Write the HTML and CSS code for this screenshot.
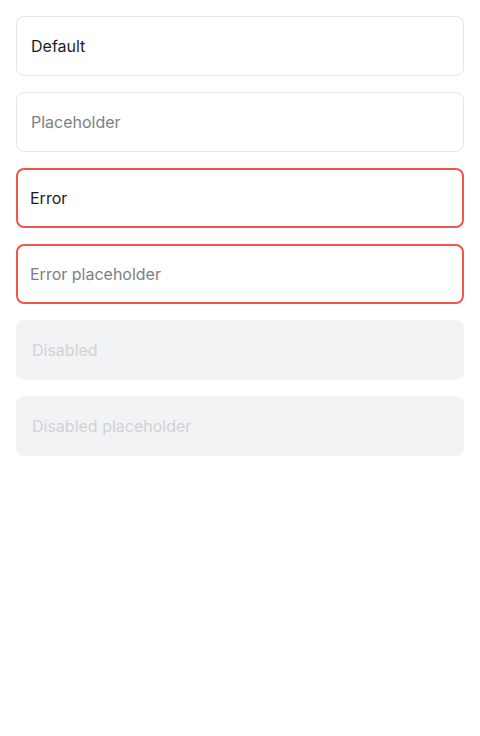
FILE: index.html
```html
<!DOCTYPE html>
<html lang="en">
<head>
<meta charset="UTF-8">
<meta name="viewport" content="width=device-width, initial-scale=1.0">
<title>Inputs</title>
<link rel="stylesheet" href="styles.css">
</head>
<body>
<div class="stack">
    <input class="field" type="text" value="Default">
    <input class="field" type="text" placeholder="Placeholder">
    <input class="field error" type="text" value="Error">
    <input class="field error" type="text" placeholder="Error placeholder">
    <input class="field" type="text" value="Disabled" disabled>
    <input class="field" type="text" placeholder="Disabled placeholder" disabled>
</div>
</body>
</html>
```
FILE: styles.css
```css
body {
    margin: 0;
    padding: 16px;
    background-color: #fff;
    font-family: Inter, "Noto Sans", sans-serif;
}

.stack {
    display: flex;
    flex-direction: column;
    gap: 16px;
}

.field {
    box-sizing: border-box;
    width: 100%;
    height: 60px;
    margin: 0;
    padding: 0 14px;
    border: 1px solid #e4e5e7;
    border-radius: 8px;
    background-color: #fff;
    font-family: inherit;
    font-size: 16px;
    color: #1d1d1f;
    outline: none;
}

.field::placeholder {
    color: #7b7f86;
}

.field.error {
    border: 2px solid #f2554a;
    padding: 0 12px;
}

.field:disabled {
    border: none;
    padding: 0 16px;
    background-color: #f2f3f5;
    color: #d0d2d6;
}

.field:disabled::placeholder {
    color: #d0d2d6;
}
```
